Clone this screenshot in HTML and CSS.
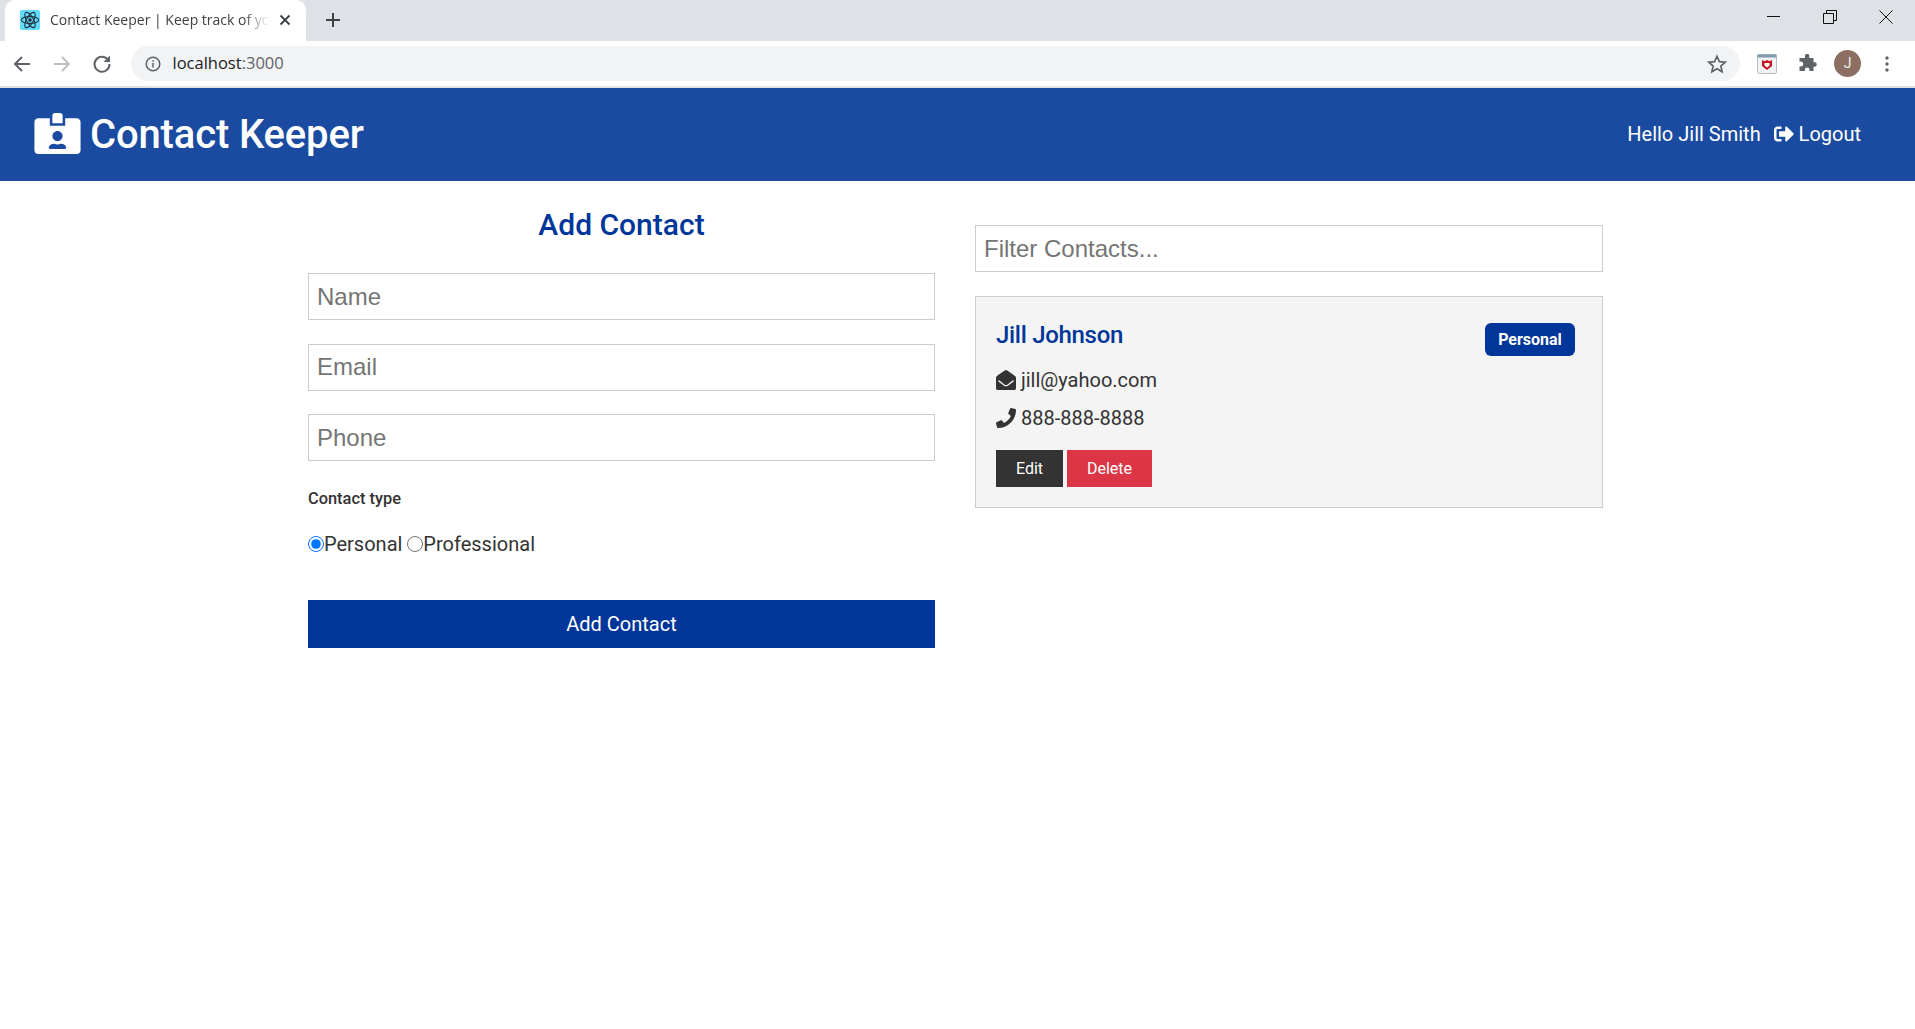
FILE: index.html
```html
<!DOCTYPE html>
<html lang="en">
<head>
<meta charset="UTF-8">
<title>Contact Keeper | Keep track of your contacts</title>
<link rel="stylesheet" href="styles.css">
</head>
<body>
<div class="browser">
    <div class="tab-strip">
        <div class="tab">
            <svg class="favicon" viewBox="0 0 20 20">
                <rect width="20" height="20" rx="2" fill="#61dafb"/>
                <g fill="none" stroke="#20323c" stroke-width="1.1">
                    <ellipse cx="10" cy="10" rx="8.6" ry="3.4"/>
                    <ellipse cx="10" cy="10" rx="8.6" ry="3.4" transform="rotate(60 10 10)"/>
                    <ellipse cx="10" cy="10" rx="8.6" ry="3.4" transform="rotate(120 10 10)"/>
                </g>
                <circle cx="10" cy="10" r="1.8" fill="#20323c"/>
            </svg>
            <span class="tab-title">Contact Keeper | Keep track of your contacts</span>
            <svg class="tab-close" viewBox="0 0 12 12"><path d="M1.5 1.5l9 9M10.5 1.5l-9 9" stroke="#3c4043" stroke-width="1.8"/></svg>
        </div>
        <svg class="new-tab" viewBox="0 0 16 16"><path d="M8 1v14M1 8h14" stroke="#3c4043" stroke-width="2"/></svg>
        <div class="window-controls">
            <svg viewBox="0 0 14 14"><path d="M0 6.5h13" stroke="#111" stroke-width="1"/></svg>
            <svg viewBox="0 0 14 14"><path d="M3.5 3V.5h10v10H11M.5 3.500h10v10H.5z" fill="none" stroke="#111" stroke-width="1"/></svg>
            <svg viewBox="0 0 14 14"><path d="M.5.500l13 13M13.500.500l-13 13" stroke="#111" stroke-width="1"/></svg>
        </div>
    </div>
    <div class="toolbar">
        <svg class="nav-icon" viewBox="0 0 24 24"><path d="M20 12H5M12 5l-7 7 7 7" fill="none" stroke="#5f6368" stroke-width="2"/></svg>
        <svg class="nav-icon" viewBox="0 0 24 24"><path d="M4 12h15M12 5l7 7-7 7" fill="none" stroke="#bdc1c6" stroke-width="2"/></svg>
        <svg class="nav-icon" viewBox="0 0 24 24"><path d="M18.500 8.500A7.500 7.500 0 1 0 19.500 12" fill="none" stroke="#5f6368" stroke-width="2"/><path d="M20 3.500V10h-6.500z" fill="#5f6368"/></svg>
        <div class="omnibox">
            <svg class="info-icon" viewBox="0 0 16 16"><circle cx="8" cy="8" r="6.800" fill="none" stroke="#5f6368" stroke-width="1.500"/><path d="M8 7v4.500M8 4.300v1.500" stroke="#5f6368" stroke-width="1.500"/></svg>
            <span class="url">localhost<span class="url-port">:3000</span></span>
            <svg class="star" viewBox="0 0 24 24"><path d="M12 3.500l2.600 5.900 6.400.600-4.800 4.200 1.400 6.300-5.600-3.300-5.600 3.300 1.400-6.300L3 10l6.400-.600z" fill="none" stroke="#5f6368" stroke-width="1.800"/></svg>
        </div>
        <div class="toolbar-right">
            <svg class="ext-mcafee" viewBox="0 0 20 20">
                <rect x=".5" y=".5" width="19" height="19" rx="1.500" fill="#f1f3f4" stroke="#b5bec4"/>
                <rect x=".5" y=".5" width="19" height="3" fill="#7f9cab"/>
                <path d="M5 6l2.500 1.200L10 6l2.500 1.200L15 6v6l-5 4-5-4z" fill="#c8101e"/>
                <path d="M7.500 9h5v2.500l-2.500 2-2.500-2z" fill="#fff"/>
            </svg>
            <svg class="ext-puzzle" viewBox="0 0 20 20"><path d="M8 1.500a2.200 2.200 0 0 1 4.300 0V4H16.500v4.200h1a2.300 2.300 0 0 1 0 4.600h-1V17H12.500v-1.200a2.300 2.300 0 0 0-4.600 0V17H2.500v-4.400h1.200a2.500 2.500 0 0 0 0-5H2.500V4H8z" fill="#5f6368"/></svg>
            <div class="avatar">J</div>
            <svg class="menu-dots" viewBox="0 0 4 16"><circle cx="2" cy="2" r="1.700"/><circle cx="2" cy="8" r="1.700"/><circle cx="2" cy="14" r="1.700"/></svg>
        </div>
    </div>
</div>

<nav class="navbar">
    <h1 class="brand">
        <svg class="brand-icon" viewBox="0 0 576 512"><path d="M528 64H384v96H192V64H48C21.500 64 0 85.500 0 112v352c0 26.500 21.500 48 48 48h480c26.500 0 48-21.500 48-48V112c0-26.500-21.500-48-48-48zM288 224c35.300 0 64 28.700 64 64s-28.700 64-64 64-64-28.700-64-64 28.700-64 64-64zm93.300 224H194.700c-10.400 0-18.800-10-15.600-19.800 8.300-25.600 32.400-44.200 60.900-44.200h8.200c12.300 5.100 25.700 8 39.800 8s27.600-2.900 39.800-8h8.200c28.400 0 52.500 18.500 60.900 44.200 3.200 9.800-5.200 19.800-15.600 19.800zM352 32c0-17.700-14.300-32-32-32h-64c-17.700 0-32 14.300-32 32v96h128V32z"/></svg>
        Contact Keeper
    </h1>
    <ul class="nav-links">
        <li>Hello Jill Smith</li>
        <li>
            <svg class="logout-icon" viewBox="0 0 512 512"><path d="M497 273L329 441c-15 15-41 4.500-41-17v-96H152c-13.300 0-24-10.700-24-24v-96c0-13.300 10.700-24 24-24h136V88c0-21.400 25.900-32 41-17l168 168c9.300 9.400 9.300 24.600 0 34zM192 436v-40c0-6.600-5.400-12-12-12H96c-17.700 0-32-14.300-32-32V160c0-17.700 14.300-32 32-32h84c6.600 0 12-5.400 12-12V76c0-6.600-5.400-12-12-12H96c-53 0-96 43-96 96v192c0 53 43 96 96 96h84c6.600 0 12-5.400 12-12z"/></svg>
            Logout
        </li>
    </ul>
</nav>

<main class="container">
    <form class="contact-form">
        <h2 class="form-title">Add Contact</h2>
        <input class="text-input" type="text" placeholder="Name">
        <input class="text-input" type="text" placeholder="Email">
        <input class="text-input" type="text" placeholder="Phone">
        <h5 class="type-label">Contact type</h5>
        <div class="type-options">
            <input class="radio" type="radio" name="type" checked>Personal
            <input class="radio" type="radio" name="type">Professional
        </div>
        <button class="btn btn-primary btn-block" type="button">Add Contact</button>
    </form>
    <section class="contacts">
        <input class="text-input filter-input" type="text" placeholder="Filter Contacts...">
        <div class="card">
            <div class="card-head">
                <h3 class="card-name">Jill Johnson</h3>
                <span class="badge">Personal</span>
            </div>
            <ul class="card-list">
                <li>
                    <svg class="card-icon" viewBox="0 0 512 512"><path d="M512 464c0 26.510-21.490 48-48 48H48c-26.510 0-48-21.490-48-48V200.724a48 48 0 0 1 18.387-37.776c24.913-19.529 45.501-35.365 164.200-121.511C199.412 29.170 232.797-.347 256 .003c23.198-.354 56.596 29.172 73.413 41.433 118.687 86.137 139.303 101.995 164.200 121.512A48 48 0 0 1 512 200.724V464zm-65.666-196.605c-2.563-3.728-7.700-4.595-11.339-1.907-22.845 16.873-55.462 40.705-105.582 77.079-16.825 12.266-50.210 41.781-73.413 41.430-23.211.344-56.559-29.143-73.413-41.430-50.114-36.370-82.734-60.204-105.582-77.079-3.639-2.688-8.776-1.821-11.339 1.907l-9.072 13.196a7.998 7.998 0 0 0 1.839 10.967c22.887 16.899 55.454 40.690 105.303 76.868 20.274 14.781 56.524 47.813 92.264 47.573 35.724.242 71.961-32.771 92.263-47.573 49.850-36.179 82.418-59.970 105.303-76.868a7.998 7.998 0 0 0 1.839-10.967l-9.071-13.196z"/></svg>
                    jill@yahoo.com
                </li>
                <li>
                    <svg class="card-icon" viewBox="0 0 512 512"><path d="M493.400 24.600l-104-24c-11.300-2.600-22.900 3.300-27.500 13.900l-48 112c-4.200 9.800-1.400 21.300 6.900 28l60.600 49.600c-36 76.700-98.900 140.500-177.200 177.200l-49.600-60.600c-6.800-8.300-18.200-11.100-28-6.900l-112 48C3.900 366.500-2 378.100.6 389.400l24 104C27.100 504.200 36.700 512 48 512c256.100 0 464-207.500 464-464 0-11.200-7.700-20.900-18.600-23.400z"/></svg>
                    888-888-8888
                </li>
            </ul>
            <div class="card-actions">
                <button class="btn btn-dark" type="button">Edit</button>
                <button class="btn btn-danger" type="button">Delete</button>
            </div>
        </div>
    </section>
</main>
</body>
</html>
```

FILE: styles.css
```css
* {
    box-sizing: border-box;
}
body {
    margin: 0;
    font-family: Roboto, "Liberation Sans", sans-serif;
    font-size: 20px;
    line-height: 1.5;
    color: #333;
    background-color: #fff;
}

/* browser chrome */
.browser {
    border-bottom: 2px solid #dee1e6;
}
.tab-strip {
    display: flex;
    align-items: center;
    height: 41px;
    background-color: #dee1e6;
    padding-left: 5px;
}
.tab {
    display: flex;
    align-items: center;
    width: 301px;
    height: 41px;
    padding: 0 15px 2px 15px;
    background-color: #fff;
    border-radius: 10px 10px 0 0;
}
.favicon {
    width: 20px;
    height: 20px;
    flex: none;
}
.tab-title {
    flex: 1;
    margin-left: 10px;
    font-family: "Open Sans", sans-serif;
    font-size: 14px;
    color: #3c4043;
    white-space: nowrap;
    overflow: hidden;
    -webkit-mask-image: linear-gradient(to right, #000 88%, transparent 100%);
    mask-image: linear-gradient(to right, #000 88%, transparent 100%);
}
.tab-close {
    width: 12px;
    height: 12px;
    margin-left: 10px;
    flex: none;
}
.new-tab {
    width: 16px;
    height: 16px;
    margin: 0 0 2px 19px;
}
.window-controls {
    display: flex;
    gap: 42px;
    margin-left: auto;
    margin-bottom: 7px;
    padding-right: 22px;
}
.window-controls svg {
    width: 14px;
    height: 14px;
}
.toolbar {
    display: flex;
    align-items: center;
    height: 45px;
    padding-left: 10px;
    background-color: #fff;
}
.nav-icon {
    width: 24px;
    height: 24px;
    margin-right: 16px;
}
.nav-icon + .nav-icon + .nav-icon {
    margin-right: 16.5px;
}
.omnibox {
    display: flex;
    align-items: center;
    flex: 1;
    height: 35px;
    padding: 0 12px 0 14px;
    background-color: #f1f3f4;
    border-radius: 18px;
}
.info-icon {
    width: 16px;
    height: 16px;
}
.url {
    flex: 1;
    margin-left: 12px;
    font-family: "Open Sans", sans-serif;
    font-size: 16.5px;
    color: #202124;
}
.url-port {
    color: #5f6368;
}
.star {
    width: 22px;
    height: 22px;
}
.toolbar-right {
    display: flex;
    align-items: center;
    width: 175px;
    padding-left: 17px;
}
.ext-mcafee {
    width: 20px;
    height: 20px;
}
.ext-puzzle {
    width: 20px;
    height: 20px;
    margin-left: 20px;
}
.avatar {
    width: 27px;
    height: 27px;
    margin-left: 17px;
    border-radius: 50%;
    background-color: #8d6e63;
    color: #eee;
    font-size: 14px;
    line-height: 27px;
    text-align: center;
}
.menu-dots {
    width: 4px;
    height: 16px;
    margin-left: 24px;
    fill: #5f6368;
}

/* navbar */
.navbar {
    display: flex;
    align-items: center;
    justify-content: space-between;
    height: 93px;
    padding: 0 54px 0 34px;
    background-color: #1a4ba0;
    color: #fff;
}
.brand {
    display: flex;
    align-items: center;
    gap: 9px;
    margin: 0;
    font-size: 40px;
    font-weight: 500;
    line-height: 1;
    letter-spacing: -0.15px;
}
.brand-icon {
    width: 47px;
    height: 41px;
    margin-bottom: 2px;
    fill: #fff;
}
.nav-links {
    display: flex;
    gap: 13px;
    margin: 0;
    padding: 0 0 2px;
    list-style: none;
}
.logout-icon {
    width: 20px;
    height: 20px;
    fill: #fff;
    vertical-align: -3px;
}

/* page */
.container {
    display: grid;
    grid-template-columns: 627px 628px;
    gap: 40px;
    padding-left: 308px;
}
.form-title {
    margin: 26px 0 30px;
    font-size: 30px;
    font-weight: 500;
    line-height: 36px;
    text-align: center;
    color: #003699;
}
.text-input {
    display: block;
    width: 100%;
    height: 47px;
    margin-bottom: 23.5px;
    padding: 0 8px;
    font-family: "Liberation Sans", Arial, sans-serif;
    font-size: 24px;
    color: #333;
    background-color: #fff;
    border: 1px solid #ccc;
    outline: none;
}
.text-input::placeholder {
    color: #757575;
}
.type-label {
    margin: 0;
    padding-top: 2px;
    font-size: 16.4px;
    font-weight: 500;
    line-height: 24px;
}
.type-options {
    margin-top: 18px;
    height: 30px;
}
.radio {
    width: 16px;
    height: 16px;
    margin: 0;
    vertical-align: -1px;
}
.btn {
    border: none;
    font-family: Roboto, sans-serif;
    color: #fff;
    cursor: pointer;
}
.btn-primary {
    background-color: #003699;
}
.btn-block {
    display: block;
    width: 100%;
    height: 48px;
    margin-top: 41px;
    font-size: 20px;
}
.filter-input {
    margin-top: 44px;
    margin-bottom: 24px;
}
.card {
    height: 212px;
    padding: 20px 27px 0 20px;
    background-color: #f4f4f4;
    border: 1px solid #ccc;
}
.card-head {
    display: flex;
    justify-content: space-between;
    align-items: flex-start;
}
.card-name {
    margin: 0;
    font-size: 24px;
    font-weight: 500;
    line-height: 36px;
    letter-spacing: -0.3px;
    color: #003699;
}
.badge {
    margin-top: 6px;
    width: 90px;
    height: 33px;
    font-size: 16px;
    font-weight: 700;
    line-height: 33px;
    text-align: center;
    color: #fff;
    background-color: #003699;
    border-radius: 6px;
}
.card-list {
    margin: 5px 0 0;
    padding: 0;
    list-style: none;
}
.card-list li {
    height: 38px;
    line-height: 38px;
}
.card-icon {
    width: 20px;
    height: 20px;
    fill: #333;
    vertical-align: -3px;
}
.card-actions {
    display: flex;
    gap: 4px;
    margin-top: 13px;
}
.card-actions .btn {
    height: 37px;
    font-size: 16px;
}
.btn-dark {
    width: 67px;
    background-color: #333;
}
.btn-danger {
    width: 85px;
    background-color: #dc3545;
}
```
